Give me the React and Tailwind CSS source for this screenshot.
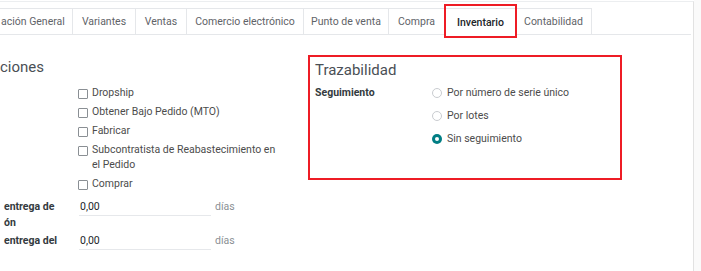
import React from 'react'

const tabs = [
  { label: 'ación General', w: 'w-[73px]', first: true },
  { label: 'Variantes', w: 'w-[63px]' },
  { label: 'Ventas', w: 'w-[51px]' },
  { label: 'Comercio electrónico', w: 'w-[117px]' },
  { label: 'Punto de venta', w: 'w-[85px]' },
  { label: 'Compra', w: 'w-[56px]' },
  { label: 'Inventario', w: 'w-[71px]', active: true },
  { label: 'Contabilidad', w: 'w-[76px]' },
]

const routes = [
  ['Dropship'],
  ['Obtener Bajo Pedido (MTO)'],
  ['Fabricar'],
  ['Subcontratista de Reabastecimiento en', 'el Pedido'],
  ['Comprar'],
]

const tracking = [
  { label: 'Por número de serie único', on: false },
  { label: 'Por lotes', on: false },
  { label: 'Sin seguimiento', on: true },
]

function Checkbox() {
  return <span className="w-[10px] h-[10px] border border-[#8a8f94] rounded-[1px] bg-white shrink-0 mt-[4px]" />
}

function Radio({ on }) {
  if (on) {
    return (
      <span className="w-[10px] h-[10px] rounded-full bg-[#017e84] flex items-center justify-center shrink-0">
        <span className="w-[4px] h-[4px] rounded-full bg-white" />
      </span>
    )
  }
  return <span className="w-[10px] h-[10px] rounded-full border border-[#c9ccd0] bg-white shrink-0" />
}

export default function App() {
  return (
    <div className="relative w-[701px] h-[271px] bg-white overflow-hidden text-[#4c4c4c]" style={{ fontFamily: 'Roboto, "Liberation Sans", sans-serif' }}>
      <div className="flex h-full">
        <div className="w-[694px] h-full border-r border-[#e2e2e2] border-t border-t-[#eceef0] mt-[1px]">
          {/* Tabs */}
          <div className="flex mt-[6px] h-[27px] border-b border-[#e5e7ea] mr-[2px]">
            {tabs.map((t) => (
              <div
                key={t.label}
                className={`${t.w} h-[27px] flex items-center ${t.first ? 'justify-start pl-[1px]' : 'justify-center'} text-[10.5px] border-r border-t border-[#e5e7ea] ${
                  t.active ? 'bg-white text-[#212529] font-medium h-[28px] border-l' : 'text-[#5f6368]'
                }`}
              >
                {t.label}
              </div>
            ))}
          </div>

          {/* Body */}
          <div className="flex mt-[20px]">
            {/* Left group */}
            <div className="w-[308px]">
              <div className="text-[15px] text-[#4a4f55] leading-[18px] h-[28px] pt-[3px]">ciones</div>
              <div className="flex flex-col text-[10.5px] leading-[15px]">
                {routes.map((r) => (
                  <div key={r[0]} className="flex gap-[4px] pl-[78px] py-[2px]">
                    <Checkbox />
                    <div className="w-[200px]">
                      {r.map((l) => (
                        <div key={l}>{l}</div>
                      ))}
                    </div>
                  </div>
                ))}
              </div>
              <div className="flex mt-[6px] text-[10.5px] leading-[16px]">
                <div className="w-[79px] pl-[4px] font-bold text-[#343a40]">
                  <div>entrega de</div>
                  <div>ón</div>
                </div>
                <div className="w-[132px] h-[17px] border-b border-[#e6e8eb] text-[#212529] pl-[1px]">0,00</div>
                <div className="pl-[4px] text-[#8a8f94]">días</div>
              </div>
              <div className="flex mt-[2px] text-[10.5px] leading-[16px]">
                <div className="w-[79px] pl-[4px] font-bold text-[#343a40]">entrega del</div>
                <div className="w-[132px] h-[17px] border-b border-[#e6e8eb] text-[#212529] pl-[1px]">0,00</div>
                <div className="pl-[4px] text-[#8a8f94]">días</div>
              </div>
            </div>

            {/* Right group */}
            <div className="w-[314px] h-[125px] border-2 border-[#ee1c25] pl-[5px] pt-[4px]">
              <div className="text-[15px] text-[#4a4f55] leading-[18px]">Trazabilidad</div>
              <div className="flex mt-[6px] text-[10.5px] leading-[15px]">
                <div className="w-[117px] font-bold text-[#343a40]">Seguimiento</div>
                <div className="flex flex-col gap-[8px]">
                  {tracking.map((t) => (
                    <div key={t.label} className="flex items-center gap-[5px]">
                      <Radio on={t.on} />
                      <span>{t.label}</span>
                    </div>
                  ))}
                </div>
              </div>
            </div>
          </div>
        </div>
        <div className="flex-1 bg-[#fafafa]" />
      </div>

      {/* Highlight over the active tab */}
      <div className="absolute left-[444px] top-[4px] w-[73px] h-[34px] border-2 border-[#ee1c25]" />
    </div>
  )
}
